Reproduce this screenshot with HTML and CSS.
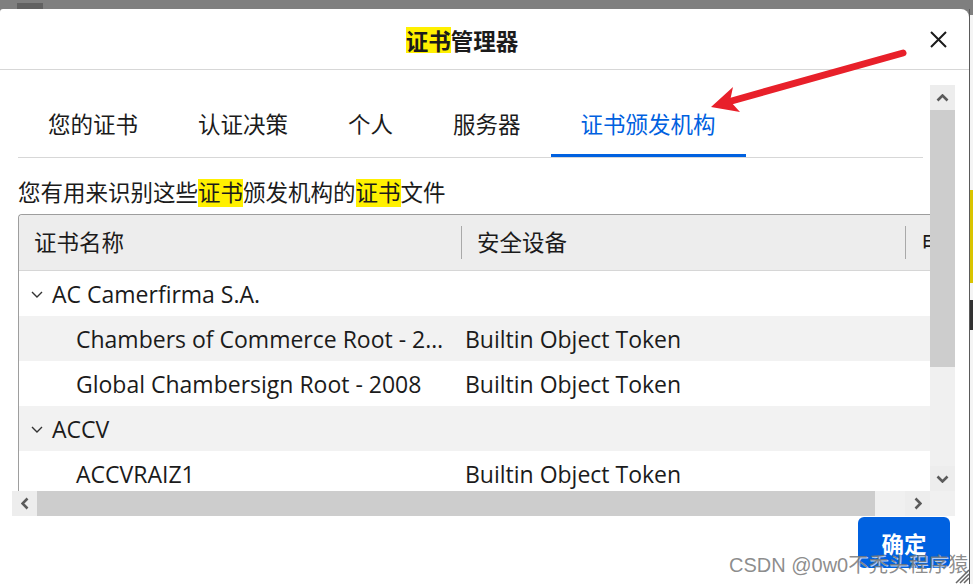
FILE: index.html
```html
<!DOCTYPE html>
<html>
	<head>
		<meta charset="utf-8">
		<title>证书管理器</title>
		<link rel="stylesheet" href="styles.css">
	</head>
	<body>

		<div class="Dialog">
			<div class="Header">
				<div class="Title"><mark>证书</mark>管理器</div>
				<div class="Close">
					<svg width="17" height="17" viewBox="0 0 17 17"><path d="M1 1L16 16M16 1L1 16" stroke="#1b1b1b" stroke-width="2" fill="none"/></svg>
				</div>
			</div>

			<div class="ScrollFrame">
				<div class="Viewport">
					<div class="Tabs">
						<div class="Tab">您的证书</div>
						<div class="Tab">认证决策</div>
						<div class="Tab">个人</div>
						<div class="Tab">服务器</div>
						<div class="Tab Active">证书颁发机构</div>
					</div>

					<div class="Description">您有用来识别这些<mark>证书</mark>颁发机构的<mark>证书</mark>文件</div>

					<div class="Tree">
						<div class="TreeHead">
							<div class="HeadCell">证书名称</div>
							<div class="HeadCell">安全设备</div>
							<div class="HeadCell">电子邮件</div>
						</div>
						<div class="TreeRow Group">
							<div class="Cell"><svg class="Twisty" width="12" height="7" viewBox="0 0 12 7"><path d="M1 1L6 6L11 1" stroke="#333" stroke-width="1.4" fill="none"/></svg>AC Camerfirma S.A.</div>
							<div class="Cell"></div>
						</div>
						<div class="TreeRow">
							<div class="Cell">Chambers of Commerce Root - 2008</div>
							<div class="Cell">Builtin Object Token</div>
						</div>
						<div class="TreeRow">
							<div class="Cell">Global Chambersign Root - 2008</div>
							<div class="Cell">Builtin Object Token</div>
						</div>
						<div class="TreeRow Group">
							<div class="Cell"><svg class="Twisty" width="12" height="7" viewBox="0 0 12 7"><path d="M1 1L6 6L11 1" stroke="#333" stroke-width="1.4" fill="none"/></svg>ACCV</div>
							<div class="Cell"></div>
						</div>
						<div class="TreeRow">
							<div class="Cell">ACCVRAIZ1</div>
							<div class="Cell">Builtin Object Token</div>
						</div>
					</div>
				</div>

				<div class="VScroll">
					<div class="SBtn"><svg width="13" height="8" viewBox="0 0 13 8"><path d="M1.5 6.5L6.5 1.5L11.5 6.5" stroke="#5b5b5b" stroke-width="2.6" fill="none"/></svg></div>
					<div class="VThumb"></div>
					<div class="Track"></div>
					<div class="SBtn"><svg width="13" height="8" viewBox="0 0 13 8"><path d="M1.5 1.5L6.5 6.5L11.5 1.5" stroke="#5b5b5b" stroke-width="2.6" fill="none"/></svg></div>
				</div>
				<div class="HScroll">
					<div class="SBtn"><svg width="8" height="13" viewBox="0 0 8 13"><path d="M6.5 1.5L1.5 6.5L6.5 11.5" stroke="#5b5b5b" stroke-width="2.6" fill="none"/></svg></div>
					<div class="HThumb"></div>
					<div class="Track"></div>
					<div class="SBtn"><svg width="8" height="13" viewBox="0 0 8 13"><path d="M1.5 1.5L6.5 6.5L1.5 11.5" stroke="#5b5b5b" stroke-width="2.6" fill="none"/></svg></div>
				</div>
				<div class="Corner"></div>
			</div>

			<div class="Footer">
				<button class="Primary">确定</button>
			</div>

			<div class="Watermark">CSDN @0w0不秃头程序猿</div>
			<svg class="Grip" width="16" height="20" viewBox="0 0 16 20">
				<path d="M15 6L2 19M15 10L6 19M15 14L10 19" stroke="#666" stroke-width="1.5"/>
			</svg>
		</div>

		<div class="SideStrip"></div>

		<!-- red annotation arrow drawn over the screenshot -->
		<svg class="Annotation" width="973" height="584" viewBox="0 0 973 584">
			<line x1="903" y1="53" x2="728" y2="102" stroke="#e8202a" stroke-width="7" stroke-linecap="round"/>
			<polygon points="711,107 733,87 730,101 740,112" fill="#e8202a"/>
		</svg>

	</body>
</html>
```

FILE: styles.css
```css
:root
{
	--text: #1b1b1b;
	--accent: #0061e0;
	--line: #d7d7d7;
	--scrollBack: #f0f0f0;
	--scrollThumb: #cdcdcd;
	--highlight: #fff000;
	--fontSize: 22.5px;
}

html,
body
{
	margin: 0;
	overflow: hidden;
}

body
{
	position: relative;
	display: flex;
	height: 575px;
	padding-top: 9px;
	background: linear-gradient(#616161,#616161) 17px 3px / 26px 6px no-repeat, #7f7f7f;
	font-family: "Open Sans", "Noto Sans CJK SC", sans-serif;
	color: var(--text);
}

mark
{
	background: var(--highlight);
	color: inherit;
	display: inline-block;
}

.Dialog
{
	position: relative;
	flex: none;
	width: 969px;
	height: 575px;
	background: #fff;
	border-radius: 3px 8px 0 0;
	display: flex;
	flex-direction: column;
}

.SideStrip
{
	flex: 1;
	border-left: 1px solid #5a5a5a;
	background: linear-gradient( to bottom, #7f7f7f 0 6px, #f4f4f4 6px 181px, #d9c400 181px 274px, #f4f4f4 274px 291px, #333 291px 321px, #f4f4f4 321px );
}

/* title bar */
.Header
{
	flex: none;
	height: 60px;
	border-bottom: 1px solid var(--line);
	display: grid;
	grid-template-columns: 1fr 45px;
	align-items: center;
}

.Title
{
	text-align: center;
	font-family: "Noto Sans CJK SC", sans-serif;
	font-size: var(--fontSize);
	font-weight: bold;
	line-height: 26px;
	padding-top: 2px;
}

.Close
{
	display: flex;
	align-items: center;
	padding-left: 6px;
}

/* content with its own scrollbars */
.ScrollFrame
{
	flex: none;
	margin: 15px 14px 0 12px;
	display: grid;
	grid-template-columns: 918px 25px;
	grid-template-rows: 406px 25px;
}

.Viewport
{
	overflow: hidden;
	padding-left: 6px;
}

.Tabs
{
	display: flex;
	width: 905px;
	border-bottom: 1px solid var(--line);
}

.Tab
{
	padding: 25px 30px 14px;
	line-height: 30px;
	font-size: var(--fontSize);
	border-bottom: 3px solid transparent;
	white-space: nowrap;
}

.Tab.Active
{
	color: var(--accent);
	border-bottom-color: var(--accent);
}

.Description
{
	margin-top: 21px;
	font-size: var(--fontSize);
	line-height: 28px;
	white-space: nowrap;
}

.Tree
{
	margin-top: 7px;
	width: 1000px;
	border-left: 1px solid #9e9e9e;
	border-top: 1px solid #9e9e9e;
	border-radius: 4px 0 0 0;
	font-size: var(--fontSize);
}

.TreeHead,
.TreeRow
{
	display: grid;
	grid-template-columns: 442px 444px 1fr;
	align-items: center;
}

.TreeHead
{
	height: 55px;
	background: #ededed;
	border-bottom: 1px solid #d6d6d6;
	border-top-left-radius: 4px;
}

.HeadCell
{
	line-height: 33px;
	padding-left: 15px;
	white-space: nowrap;
	overflow: hidden;
}

.HeadCell + .HeadCell
{
	border-left: 1px solid #a9a9a9;
}

.TreeRow
{
	height: 45px;
	line-height: 30px;
	font-size: 23px;
	background: #fff;
}

.TreeRow:nth-child(odd)
{
	background: #f2f2f2;
}

.Cell
{
	white-space: nowrap;
	overflow: hidden;
	text-overflow: ellipsis;
	padding-left: 4px;
}

.TreeRow .Cell:first-child
{
	padding-left: 57px;
	padding-right: 13px;
}

.TreeRow.Group .Cell:first-child
{
	display: flex;
	align-items: center;
	gap: 9px;
	padding-left: 12px;
}

.Twisty
{
	flex: none;
	margin-top: 2px;
}

.VScroll,
.HScroll
{
	display: flex;
	background: var(--scrollBack);
}

.VScroll
{
	flex-direction: column;
}

.SBtn
{
	flex: none;
	width: 25px;
	height: 25px;
	display: flex;
	align-items: center;
	justify-content: center;
	background: #ededed;
}

.VThumb
{
	height: 257px;
	background: var(--scrollThumb);
}

.HThumb
{
	width: 838px;
	background: var(--scrollThumb);
}

.Track
{
	flex: 1;
}

.Corner
{
	background: var(--scrollBack);
}

.Footer
{
	display: flex;
	justify-content: flex-end;
	padding: 1px 19px 0 0;
}

.Primary
{
	width: 92px;
	height: 51px;
	border: 0;
	border-radius: 6px;
	background: var(--accent);
	color: #fff;
	font-family: "Noto Sans CJK SC", sans-serif;
	font-size: var(--fontSize);
	font-weight: bold;
}

/* overlays: watermark, resize grip, annotation */
.Watermark
{
	position: absolute;
	left: 729px;
	top: 544px;
	font-family: "Liberation Sans", "Noto Sans CJK SC", sans-serif;
	font-size: 20px;
	line-height: 24px;
	color: rgba(120,120,120,0.85);
	text-shadow: 1px 1px 0 rgba(255,255,255,0.7);
	white-space: nowrap;
}

.Grip
{
	position: absolute;
	right: -1px;
	bottom: 0;
}

.Annotation
{
	position: absolute;
	left: 0;
	top: 0;
	pointer-events: none;
}
```
